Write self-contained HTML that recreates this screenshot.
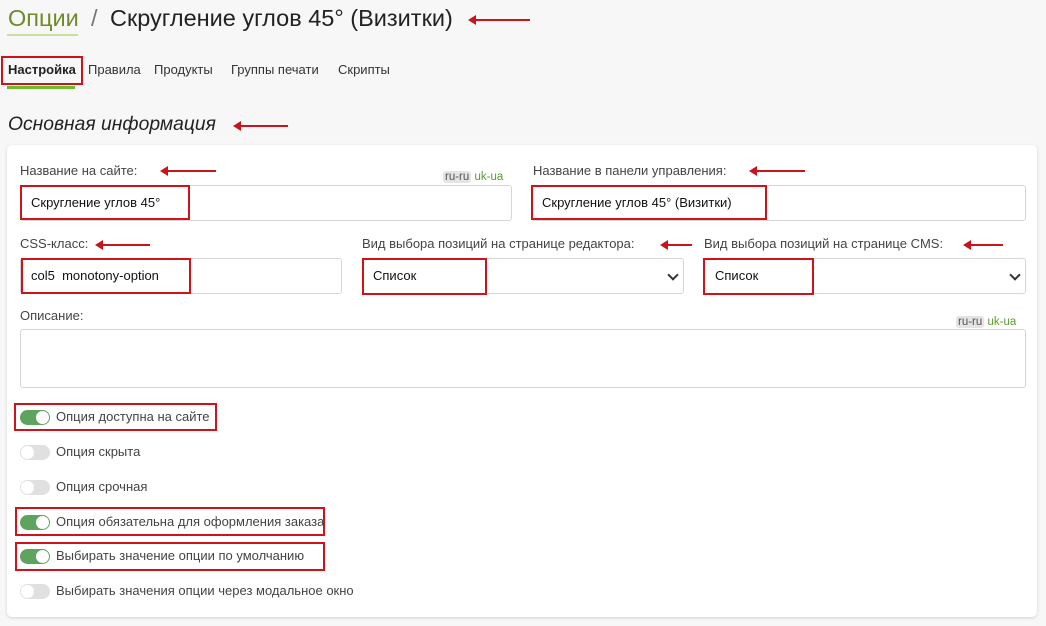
<!DOCTYPE html>
<html><head><meta charset="utf-8"><style>
*{box-sizing:border-box;margin:0;padding:0}
body{width:1046px;height:626px;background:#f7f7f7;font-family:"Liberation Sans","DejaVu Sans",sans-serif;position:relative;overflow:hidden;color:#333}
.a{position:absolute}
.red{position:absolute;border:2px solid #d0121b}
.arr{position:absolute;height:2px;background:#c8141c}
.arr:before{content:"";position:absolute;left:-6px;top:-4px;border-right:8px solid #c8141c;border-top:5px solid transparent;border-bottom:5px solid transparent}
.lbl{position:absolute;font-size:13px;color:#444;white-space:nowrap}
.inp{position:absolute;border:1px solid #d6d6d6;border-radius:3px;background:#fff;font-size:13px;color:#111;padding-left:10px;line-height:34px;white-space:nowrap}
.badge{position:absolute;font-size:11.5px;white-space:nowrap}
.badge span{background:#e4e4e4;color:#555;border-radius:3px;padding:0 2px}
.badge b{font-weight:normal;color:#5a9a2a}
.tg{position:absolute;left:20px;width:30px;height:15px;border-radius:8px;background:#e0e0e0}
.tg:after{content:"";position:absolute;left:1px;top:1px;width:13px;height:13px;border-radius:50%;background:#fff}
.tg.on{background:#5ea35e}
.tg.on:after{left:16px}
.tl{position:absolute;left:56px;font-size:13px;color:#444;white-space:nowrap}
.chev{position:absolute;right:6px;top:12px;width:8px;height:8px;border-right:2px solid #333;border-bottom:2px solid #333;transform:rotate(45deg)}
</style></head><body>
<div class="a" style="left:8px;top:5px;font-size:23.5px;color:#6f8a2c">Опции</div>
<div class="a" style="left:7px;top:34px;width:71px;height:2px;background:#c9e0a0"></div>
<div class="a" style="left:91px;top:5px;font-size:23.5px;color:#777">/</div>
<div class="a" style="left:110px;top:5px;font-size:23.5px;color:#222">Скругление углов 45° (Визитки)</div>
<div class="arr" style="left:474px;top:19px;width:56px"></div>

<div class="a" style="left:8px;top:62px;font-size:13px;font-weight:bold;color:#222">Настройка</div>
<div class="a" style="left:88px;top:62px;font-size:13px;color:#333">Правила</div>
<div class="a" style="left:154px;top:62px;font-size:13px;color:#333">Продукты</div>
<div class="a" style="left:231px;top:62px;font-size:13px;color:#333">Группы печати</div>
<div class="a" style="left:338px;top:62px;font-size:13px;color:#333">Скрипты</div>
<div class="red" style="left:1px;top:56px;width:82px;height:29px"></div>
<div class="a" style="left:7px;top:86px;width:68px;height:3px;background:#6cbf2a"></div>

<div class="a" style="left:8px;top:114px;font-size:19.3px;font-style:italic;color:#222">Основная информация</div>
<div class="arr" style="left:239px;top:125px;width:49px"></div>

<div class="a" style="left:7px;top:145px;width:1030px;height:472px;background:#fff;border-radius:5px;box-shadow:0 1px 3px rgba(0,0,0,.15)"></div>

<div class="lbl" style="left:20px;top:163px">Название на сайте:</div>
<div class="arr" style="left:166px;top:170px;width:50px"></div>
<div class="badge" style="left:443px;top:171px"><span>ru-ru</span> <b>uk-ua</b></div>
<div class="inp" style="left:20px;top:185px;width:492px;height:36px">Скругление углов 45°</div>
<div class="red" style="left:20px;top:185px;width:170px;height:35px"></div>

<div class="lbl" style="left:533px;top:163px">Название в панели управления:</div>
<div class="arr" style="left:755px;top:170px;width:50px"></div>
<div class="inp" style="left:531px;top:185px;width:495px;height:36px">Скругление углов 45° (Визитки)</div>
<div class="red" style="left:531px;top:185px;width:236px;height:35px"></div>

<div class="lbl" style="left:20px;top:236px">CSS-класс:</div>
<div class="arr" style="left:101px;top:244px;width:49px"></div>
<div class="inp" style="left:20px;top:258px;width:322px;height:36px">col5&nbsp; monotony-option</div>
<div class="red" style="left:21px;top:258px;width:170px;height:36px"></div>

<div class="lbl" style="left:362px;top:236px">Вид выбора позиций на странице редактора:</div>
<div class="arr" style="left:666px;top:244px;width:26px"></div>
<div class="inp" style="left:362px;top:258px;width:322px;height:36px">Список<div class="chev"></div></div>
<div class="red" style="left:362px;top:258px;width:125px;height:37px"></div>

<div class="lbl" style="left:704px;top:236px">Вид выбора позиций на странице CMS:</div>
<div class="arr" style="left:969px;top:244px;width:34px"></div>
<div class="inp" style="left:704px;top:258px;width:322px;height:36px">Список<div class="chev"></div></div>
<div class="red" style="left:703px;top:258px;width:111px;height:37px"></div>

<div class="lbl" style="left:20px;top:308px">Описание:</div>
<div class="badge" style="left:956px;top:316px"><span>ru-ru</span> <b>uk-ua</b></div>
<div class="inp" style="left:20px;top:329px;width:1006px;height:59px"></div>

<div class="tg on" style="top:410px"></div><div class="tl" style="top:409px">Опция доступна на сайте</div>
<div class="red" style="left:14px;top:403px;width:203px;height:28px"></div>
<div class="tg" style="top:445px"></div><div class="tl" style="top:444px">Опция скрыта</div>
<div class="tg" style="top:480px"></div><div class="tl" style="top:479px">Опция срочная</div>
<div class="tg on" style="top:515px"></div><div class="tl" style="top:514px">Опция обязательна для оформления заказа</div>
<div class="red" style="left:15px;top:507px;width:310px;height:29px"></div>
<div class="tg on" style="top:549px"></div><div class="tl" style="top:548px">Выбирать значение опции по умолчанию</div>
<div class="red" style="left:15px;top:542px;width:310px;height:29px"></div>
<div class="tg" style="top:584px"></div><div class="tl" style="top:583px">Выбирать значения опции через модальное окно</div>
</body></html>
